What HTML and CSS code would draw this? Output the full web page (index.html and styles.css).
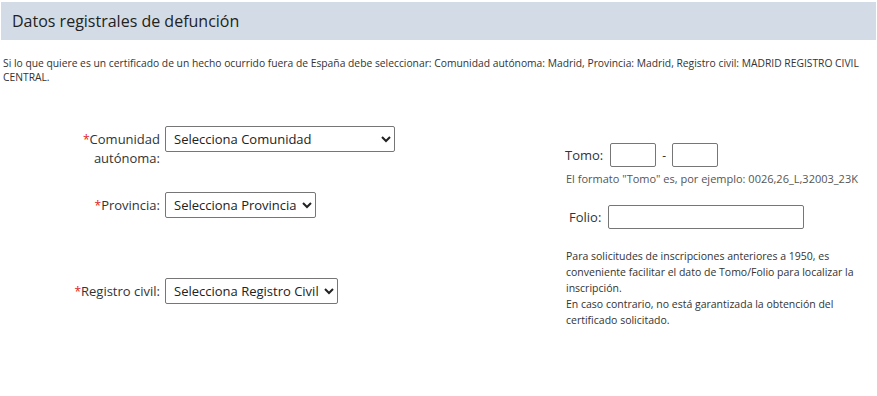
FILE: index.html
```html
<!DOCTYPE html>
<html lang="es">
<head>
    <meta charset="UTF-8">
    <title>Datos registrales de defunción</title>
    <link rel="stylesheet" href="styles.css">
</head>
<body>

<header class="section-title">
    <h2>Datos registrales de defunción</h2>
</header>

<p class="notice">Si lo que quiere es un certificado de un hecho ocurrido fuera de España debe seleccionar: Comunidad autónoma: Madrid, Provincia: Madrid, Registro civil: MADRID REGISTRO CIVIL CENTRAL.</p>

<div class="form-body">
    <div class="left-col">
        <div class="field row-comunidad">
            <label for="comunidad"><span class="req">*</span>Comunidad autónoma:</label>
            <select id="comunidad" class="sel-comunidad">
                <option>Selecciona Comunidad</option>
            </select>
        </div>
        <div class="field row-provincia">
            <label for="provincia"><span class="req">*</span>Provincia:</label>
            <select id="provincia">
                <option>Selecciona Provincia</option>
            </select>
        </div>
        <div class="field row-registro">
            <label for="registro"><span class="req">*</span>Registro civil:</label>
            <select id="registro">
                <option>Selecciona Registro Civil</option>
            </select>
        </div>
    </div>

    <div class="right-col">
        <div class="tomo-row">
            <label for="tomo1">Tomo:</label>
            <input type="text" id="tomo1" class="small-input">
            <span class="dash">-</span>
            <input type="text" id="tomo2" class="small-input">
        </div>
        <p class="hint">El formato "Tomo" es, por ejemplo: 0026,26_L,32003_23K</p>
        <div class="folio-row">
            <label for="folio">Folio:</label>
            <input type="text" id="folio" class="folio-input">
        </div>
        <p class="info">Para solicitudes de inscripciones anteriores a 1950, es conveniente facilitar el dato de Tomo/Folio para localizar la inscripción.<br>En caso contrario, no está garantizada la obtención del certificado solicitado.</p>
    </div>
</div>

</body>
</html>
```

FILE: styles.css
```css
body {
    margin: 0;
    font-family: "Open Sans", "Noto Sans", sans-serif;
    color: #333;
    background: #fff;
}

.section-title {
    margin: 2px 1px 0;
    height: 38px;
    background: #d3dce6;
    display: flex;
    align-items: center;
}
.section-title h2 {
    margin: 0 0 0 11px;
    font-size: 16px;
    font-weight: normal;
    color: #222;
}

.notice {
    margin: 16px 0 0 3px;
    width: 870px;
    font-size: 10.3px;
    line-height: 14px;
    color: #333;
}

.form-body {
    display: flex;
    margin-top: 42px;
}

.left-col {
    width: 560px;
}
.field {
    display: flex;
    align-items: flex-start;
}
.field label {
    width: 160px;
    text-align: right;
    font-size: 13px;
    line-height: 19px;
    padding-top: 4px;
    margin-right: 5px;
}
.req {
    color: #e02020;
    font-size: 12px;
}
.row-comunidad label {
    padding-left: 78px;
    box-sizing: border-box;
}
.row-provincia {
    margin-top: 24px;
}
.row-registro {
    margin-top: 60px;
}

select {
    height: 26px;
    font-family: "Open Sans", "Noto Sans", sans-serif;
    font-size: 13px;
    color: #222;
    background: #fff;
    border: 1px solid #767676;
    border-radius: 2px;
    padding: 0 2px 0 4px;
}
.sel-comunidad {
    width: 230px;
}

.right-col {
    padding-top: 17px;
    padding-left: 5px;
}
.tomo-row,
.folio-row {
    display: flex;
    align-items: center;
    font-size: 13px;
}
.tomo-row label {
    margin-right: 7px;
}
.folio-row label {
    margin-left: 4px;
    margin-right: 7px;
}
input {
    height: 24px;
    box-sizing: border-box;
    border: 1px solid #767676;
    border-radius: 2px;
}
.small-input {
    width: 46px;
}
.dash {
    margin: 0 6px;
    font-size: 12px;
}
.folio-input {
    width: 196px;
}
.hint {
    margin: 4px 0 0 1px;
    font-size: 11px;
    color: #555;
}
.folio-row {
    margin-top: 19px;
}
.info {
    margin: 19px 0 0 1px;
    width: 308px;
    font-size: 10.5px;
    line-height: 16px;
    color: #333;
}
```
